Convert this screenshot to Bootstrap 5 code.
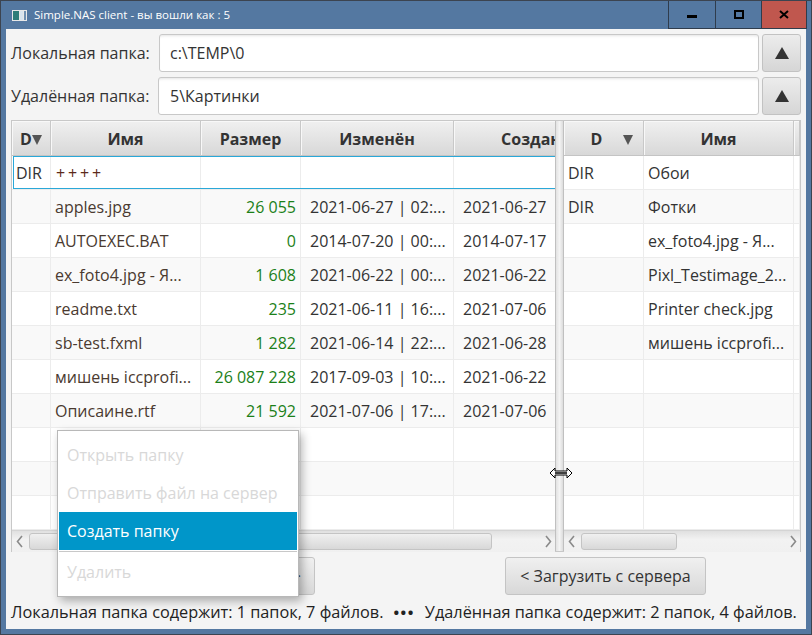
<!DOCTYPE html>
<html lang="ru">
<head>
<meta charset="UTF-8">
<meta name="viewport" content="width=device-width, initial-scale=1.0">
<title>Simple.NAS client</title>
<link href="https://cdn.jsdelivr.net/npm/bootstrap@5.3.0/dist/css/bootstrap.min.css" rel="stylesheet">
<script src="https://cdn.jsdelivr.net/npm/bootstrap@5.3.0/dist/js/bootstrap.bundle.min.js"></script>
<style>
html, body { margin: 0; height: 635px; overflow: hidden; background: #f4f4f4; }
body { font-family: "Open Sans", "Noto Sans", sans-serif; font-size: 16px; color: #333; }
.app-window { width: 812px; height: 635px; border: 1px solid #3c4450; background: #5478a1; position: relative; }
.title-bar { height: 28px; color: #fff; font-size: 11.5px; padding-left: 11px; }
.title-icon { width: 15px; height: 11px; margin-right: 7px; }
.win-btn { height: 28px; border-left: 1px solid #2f3c4c; border-bottom: 1px solid #2f3c4c; }
.win-min { width: 47px; }
.win-max { width: 46px; }
.win-close { width: 46px; background: #c0574e; border-right: 1px solid #2f3c4c; margin-right: 4px; }
.app-body { width: 800px; height: 600px; margin-left: 5px; background: #f4f4f4; padding: 5px 5px 0 5px; }
.path-row { height: 38px; margin-bottom: 5px; }
.path-label { color: #333; }
.path-label-a { width: 148px; }
.path-label-b { width: 147px; }
.path-field { height: 38px; background: #fff; border: 1px solid #c8c8c8; border-radius: 3px; box-shadow: inset 0 3px 3px -2px #e4e4e4; padding-left: 11px; color: #333; }
.field-a { padding-left: 10px; }
.up-btn { width: 39px; height: 38px; margin-left: 3px; border: 1px solid #c2c2c2; border-radius: 3px; background: linear-gradient(#ececec, #d6d6d6); }
.tables-box { height: 432px; border: 1px solid #c8c8c8; background: #fff; }
.pane-left { width: 543px; flex-shrink: 0; }
.pane-right { width: 236px; flex-shrink: 0; }
.split-bar { width: 9px; flex-shrink: 0; border-left: 1px solid #c0c0c0; border-right: 1px solid #c0c0c0; background: linear-gradient(90deg, #e2e2e2, #f4f4f4 50%, #dcdcdc); }
.grid-clip { height: 409px; overflow: hidden; position: relative; }
.fx-table { table-layout: fixed; border-collapse: separate; border-spacing: 0; white-space: nowrap; }
.left-table { width: 597px; }
.right-table { width: 236px; }
.fx-table th { height: 35px; padding: 1px 0 0; text-align: center; font-weight: 700; color: #333; background: linear-gradient(#f0f0f0, #d8d8d8); border-right: 1px solid #c8c8c8; border-bottom: 1px solid #c4c4c4; box-shadow: inset 1px 1px 0 #f8f8f8; overflow: hidden; }
.fx-table th.th-sorted { padding-left: 16px; }
.fx-table td { height: 34px; padding: 0 4px; border-right: 1px solid #ececec; border-bottom: 1px solid #ececec; overflow: hidden; color: #333; }
.fx-table tr:nth-child(even) td { background: #f9f9f9; }
.fx-table td.c-name { color: #4a3a30; }
.fx-table td.c-size { color: #1b8018; text-align: right; }
.fx-table td.c-date { padding-left: 9px; }
.fx-table td.c-plus { color: #5c2a1a; padding-left: 5px; word-spacing: -1.3px; }
.col-d { width: 39px; }
.col-name { width: 150px; }
.col-size { width: 100px; }
.col-date { width: 153px; }
.col-made { width: 155px; }
.col-d2 { width: 80px; }
.col-end { width: 6px; }
.sel-line { position: absolute; left: 1px; top: 35px; width: 543px; height: 33px; border: 1px solid #2aa8d8; border-right: 0; pointer-events: none; }
.sort-tri { display: inline-block; width: 0; height: 0; border-left: 5.5px solid transparent; border-right: 5.5px solid transparent; border-top: 10px solid #555; }
.h-scroll { height: 22px; background: linear-gradient(#e0e0e0, #f2f2f2 40%, #f0f0f0); border-top: 1px solid #d4d4d4; padding: 2px 0 2px 17px; position: relative; }
.h-thumb { height: 17px; border: 1px solid #c4c4c4; border-radius: 3px; background: linear-gradient(#f0f0f0, #d8d8d8); }
.thumb-left { width: 463px; }
.thumb-right { width: 96px; }
.arrow-l { position: absolute; left: 4px; top: 4px; }
.arrow-r { position: absolute; right: 3px; top: 4px; }
.action-row { height: 38px; margin-top: 5px; }
.action-left { margin-left: 89px; width: 215px; padding-right: 13px; }
.action-right { margin-left: 190px; width: 201px; }
.act-btn { height: 38px; border: 1px solid #c4c4c4; border-radius: 3px; background: linear-gradient(#f0f0f0, #d8d8d8); color: #333; }
.status-line { height: 34px; color: #222; white-space: nowrap; font-size: 16.3px; }
.status-dots { font-weight: 700; margin: 0 10px; letter-spacing: 1.5px; font-size: 15px; }
.ctx-menu { position: absolute; left: 56px; top: 429px; width: 242px; height: 167px; background: #fff; border: 1px solid #b8b8b8; box-shadow: 3px 4px 9px rgba(0,0,0,.3); padding-top: 5px; z-index: 5; }
.ctx-item { height: 38px; line-height: 38px; padding-left: 8px; margin: 0 1px; color: #d8d8d8; }
.ctx-item-on { background: #0096c9; color: #fff; }
.ctx-sep { border-top: 1px solid #c8c8c8; margin: 1px 1px 1px; height: 1px; }
.resize-cur { position: absolute; left: 548px; top: 466px; z-index: 6; }
</style>
</head>
<body>
<div class="app-window">
    <div class="title-bar d-flex align-items-center">
        <svg class="title-icon" viewBox="0 0 15 11"><rect width="15" height="11" fill="#e8e8e8"/><rect x="1" y="1" width="6" height="9" fill="#2f7d78"/><rect x="8" y="1" width="3" height="9" fill="#d8e4ee"/><rect x="12" y="1" width="2" height="9" fill="#6f8fb0"/></svg>
        <span>Simple.NAS client - вы вошли как : 5</span>
        <div class="ms-auto d-flex">
            <div class="win-btn win-min d-flex justify-content-center"><svg width="12" height="27" viewBox="0 0 12 27"><rect x="1" y="14" width="10" height="3" fill="#000"/></svg></div>
            <div class="win-btn win-max d-flex justify-content-center"><svg width="12" height="27" viewBox="0 0 12 27"><rect x="2" y="10" width="8" height="7" fill="none" stroke="#000" stroke-width="2"/></svg></div>
            <div class="win-btn win-close d-flex justify-content-center"><svg width="12" height="27" viewBox="0 0 12 27"><path d="M2 10l8 7M10 10l-8 7" stroke="#000" stroke-width="2" fill="none"/></svg></div>
        </div>
    </div>
    <div class="app-body">
        <div class="path-row d-flex align-items-center">
            <div class="path-label path-label-a">Локальная папка:</div>
            <div class="path-field field-a flex-grow-1 d-flex align-items-center">c:\TEMP\0</div>
            <div class="up-btn d-flex align-items-center justify-content-center"><svg width="14" height="12" viewBox="0 0 14 12"><path d="M7 0l7 12H0z" fill="#333"/></svg></div>
        </div>
        <div class="path-row d-flex align-items-center">
            <div class="path-label path-label-b">Удалённая папка:</div>
            <div class="path-field flex-grow-1 d-flex align-items-center">5\Картинки</div>
            <div class="up-btn d-flex align-items-center justify-content-center"><svg width="14" height="12" viewBox="0 0 14 12"><path d="M7 0l7 12H0z" fill="#333"/></svg></div>
        </div>
        <div class="tables-box d-flex">
            <div class="pane-left">
                <div class="grid-clip">
                    <table class="fx-table left-table">
                        <colgroup><col class="col-d"><col class="col-name"><col class="col-size"><col class="col-date"><col class="col-made"></colgroup>
                        <thead><tr><th>D<span class="sort-tri"></span></th><th>Имя</th><th>Размер</th><th>Изменён</th><th>Создан</th></tr></thead>
                        <tbody>
                            <tr><td>DIR</td><td class="c-plus">+ + + +</td><td></td><td></td><td></td></tr>
                            <tr><td></td><td class="c-name">apples.jpg</td><td class="c-size">26 055</td><td class="c-date">2021-06-27 | 02:...</td><td class="c-date">2021-06-27</td></tr>
                            <tr><td></td><td class="c-name">AUTOEXEC.BAT</td><td class="c-size">0</td><td class="c-date">2014-07-20 | 00:...</td><td class="c-date">2014-07-17</td></tr>
                            <tr><td></td><td class="c-name">ex_foto4.jpg - Я...</td><td class="c-size">1 608</td><td class="c-date">2021-06-22 | 00:...</td><td class="c-date">2021-06-22</td></tr>
                            <tr><td></td><td class="c-name">readme.txt</td><td class="c-size">235</td><td class="c-date">2021-06-11 | 16:...</td><td class="c-date">2021-07-06</td></tr>
                            <tr><td></td><td class="c-name">sb-test.fxml</td><td class="c-size">1 282</td><td class="c-date">2021-06-14 | 22:...</td><td class="c-date">2021-06-28</td></tr>
                            <tr><td></td><td class="c-name">мишень iccprofi...</td><td class="c-size">26 087 228</td><td class="c-date">2017-09-03 | 10:...</td><td class="c-date">2021-06-22</td></tr>
                            <tr><td></td><td class="c-name">Описаине.rtf</td><td class="c-size">21 592</td><td class="c-date">2021-07-06 | 17:...</td><td class="c-date">2021-07-06</td></tr>
                            <tr><td></td><td></td><td></td><td></td><td></td></tr>
                            <tr><td></td><td></td><td></td><td></td><td></td></tr>
                            <tr><td></td><td></td><td></td><td></td><td></td></tr>
                        </tbody>
                    </table>
                    <div class="sel-line"></div>
                </div>
                <div class="h-scroll">
                    <svg class="arrow-l" width="7" height="13" viewBox="0 0 7 13"><path d="M6 1L1.5 6.5 6 12" fill="none" stroke="#8a8a8a" stroke-width="1.6"/></svg>
                    <div class="h-thumb thumb-left"></div>
                    <svg class="arrow-r" width="7" height="13" viewBox="0 0 7 13"><path d="M1 1l4.5 5.5L1 12" fill="none" stroke="#8a8a8a" stroke-width="1.6"/></svg>
                </div>
            </div>
            <div class="split-bar"></div>
            <div class="pane-right">
                <div class="grid-clip">
                    <table class="fx-table right-table">
                        <colgroup><col class="col-d2"><col class="col-name"><col class="col-end"></colgroup>
                        <thead><tr><th class="th-sorted"><span class="me-2">D</span> <span class="sort-tri ms-2"></span></th><th>Имя</th><th></th></tr></thead>
                        <tbody>
                            <tr><td>DIR</td><td>Обои</td><td></td></tr>
                            <tr><td>DIR</td><td>Фотки</td><td></td></tr>
                            <tr><td></td><td>ex_foto4.jpg - Я...</td><td></td></tr>
                            <tr><td></td><td>Pixl_Testimage_2...</td><td></td></tr>
                            <tr><td></td><td>Printer check.jpg</td><td></td></tr>
                            <tr><td></td><td>мишень iccprofi...</td><td></td></tr>
                            <tr><td></td><td></td><td></td></tr>
                            <tr><td></td><td></td><td></td></tr>
                            <tr><td></td><td></td><td></td></tr>
                            <tr><td></td><td></td><td></td></tr>
                            <tr><td></td><td></td><td></td></tr>
                        </tbody>
                    </table>
                </div>
                <div class="h-scroll">
                    <svg class="arrow-l" width="7" height="13" viewBox="0 0 7 13"><path d="M6 1L1.5 6.5 6 12" fill="none" stroke="#8a8a8a" stroke-width="1.6"/></svg>
                    <div class="h-thumb thumb-right"></div>
                    <svg class="arrow-r" width="7" height="13" viewBox="0 0 7 13"><path d="M1 1l4.5 5.5L1 12" fill="none" stroke="#8a8a8a" stroke-width="1.6"/></svg>
                </div>
            </div>
        </div>
        <div class="action-row d-flex">
            <div class="act-btn action-left d-flex align-items-center justify-content-end">&gt;</div>
            <div class="act-btn action-right d-flex align-items-center justify-content-center">&lt; Загрузить с сервера</div>
        </div>
        <div class="status-line d-flex align-items-center">
            <span>Локальная папка содержит: 1 папок, 7 файлов.</span><span class="status-dots">•••</span><span>Удалённая папка содержит: 2 папок, 4 файлов.</span>
        </div>
    </div>
    <div class="ctx-menu">
        <div class="ctx-item">Открыть папку</div>
        <div class="ctx-item">Отправить файл на сервер</div>
        <div class="ctx-item ctx-item-on">Создать папку</div>
        <div class="ctx-sep"></div>
        <div class="ctx-item">Удалить</div>
    </div>
    <svg class="resize-cur" width="24" height="12" viewBox="0 0 24 12"><path d="M1 6l5-5v3h12V1l5 5-5 5V8H6v3z" fill="#fff" stroke="#000" stroke-width="1"/><path d="M6 6h12" stroke="#000" stroke-width="1.5"/></svg>
</div>
</body>
</html>
